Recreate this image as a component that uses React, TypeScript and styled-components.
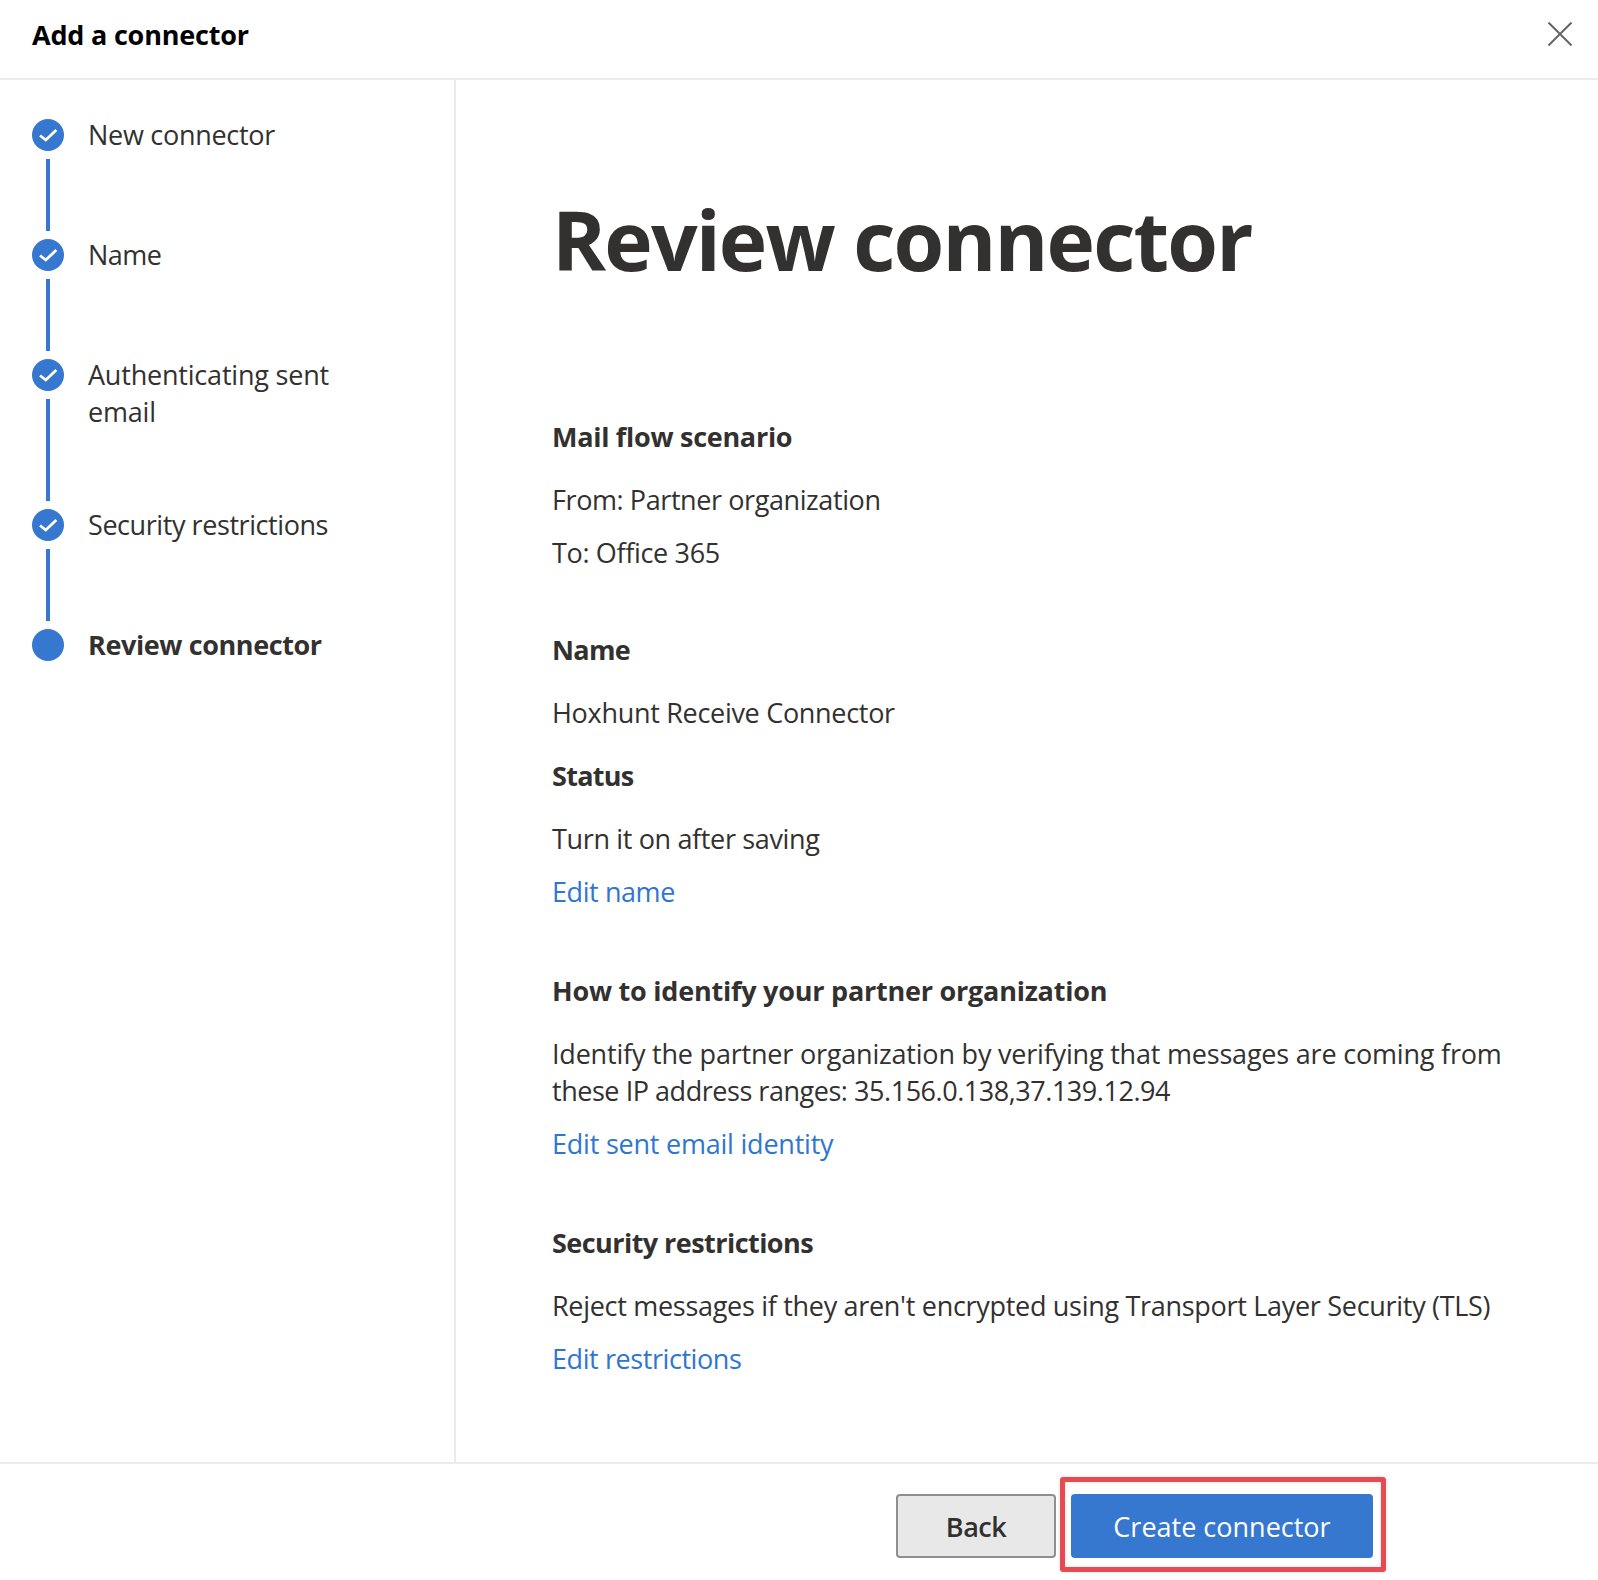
import React from "react";
import styled, { createGlobalStyle } from "styled-components";

const GlobalStyle = createGlobalStyle`
  html, body { margin: 0; padding: 0; background: #fff; }
  body { font-family: "Open Sans", "Noto Sans", "Liberation Sans", sans-serif; }
`;

const Panel = styled.div`
  width: 1598px;
  height: 1580px;
  display: flex;
  flex-direction: column;
  color: #323130;
  background: #fff;
  overflow: hidden;
`;

const Header = styled.header`
  height: 78px;
  flex: none;
  box-sizing: content-box;
  border-bottom: 2px solid #ebebeb;
  display: flex;
  align-items: center;
  justify-content: space-between;
  padding: 0 26px 0 32px;
`;

const HeaderTitle = styled.h1`
  margin: -10px 0 0;
  font-size: 27px;
  font-weight: 700;
  color: #000;
  letter-spacing: -0.2px;
`;

const CloseButton = styled.button`
  border: 0;
  background: none;
  padding: 0;
  width: 24px;
  height: 24px;
  display: block;
  color: #666;
  margin-top: -10px;
`;

const Body = styled.div`
  flex: 1;
  min-height: 0;
  display: flex;
`;

const Sidebar = styled.nav`
  width: 454px;
  flex: none;
  box-sizing: content-box;
  border-right: 2px solid #ebebeb;
  padding-top: 39px;
`;

const Step = styled.div<{ $height: number }>`
  display: grid;
  grid-template-columns: 32px 1fr;
  column-gap: 24px;
  height: ${(p) => p.$height}px;
  padding-left: 32px;
`;

const StepMarker = styled.div`
  display: flex;
  flex-direction: column;
  align-items: center;
`;

const StepCircle = styled.div`
  width: 32px;
  height: 32px;
  flex: none;
  border-radius: 50%;
  background: #3677d0;
`;

const StepLine = styled.div`
  flex: 1;
  width: 4px;
  background: #3677d0;
  margin: 8px 0;
`;

const StepLabel = styled.div<{ $current?: boolean; $ls?: number }>`
  font-size: 27px;
  line-height: 37px;
  margin-top: -3px;
  width: 260px;
  letter-spacing: ${(p) => p.$ls ?? -0.28}px;
  font-weight: ${(p) => (p.$current ? 700 : 400)};
`;

const Content = styled.main`
  flex: 1;
  min-width: 0;
  padding: 0 0 0 96px;
`;

const Title = styled.h2`
  margin: 109px 0 0;
  font-size: 82px;
  line-height: 100px;
  font-weight: 700;
  letter-spacing: -1.85px;
`;

const Section = styled.section<{ $top: number }>`
  margin-top: ${(p) => p.$top}px;
  width: 960px;
`;

const Heading = styled.h3<{ $ls?: number }>`
  margin: 0;
  font-size: 27px;
  line-height: 37px;
  font-weight: 700;
  letter-spacing: ${(p) => p.$ls ?? -0.4}px;
`;

const Text = styled.p<{ $top: number; $ls?: number }>`
  margin: ${(p) => p.$top}px 0 0;
  font-size: 27px;
  line-height: 37px;
  letter-spacing: ${(p) => p.$ls ?? -0.26}px;
`;

const TightRun = styled.span`
  letter-spacing: -0.46px;
`;

const EditLink = styled.a<{ $ls?: number }>`
  display: block;
  margin-top: 16px;
  font-size: 27px;
  line-height: 37px;
  letter-spacing: ${(p) => p.$ls ?? -0.3}px;
  color: #2f76d2;
  text-decoration: none;
`;

const Footer = styled.footer`
  flex: none;
  height: 118px;
  border-top: 2px solid #ebebeb;
  display: flex;
  align-items: flex-start;
  padding: 30px 0 0 896px;
  gap: 15px;
  box-sizing: border-box;
`;

const BackButton = styled.button`
  width: 160px;
  height: 64px;
  box-sizing: border-box;
  border: 2px solid #8f8f8f;
  border-radius: 4px;
  background: #e8e8e8;
  color: #323130;
  font: 600 27px "Open Sans", sans-serif;
  letter-spacing: -0.5px;
`;

const Highlight = styled.div`
  position: relative;
`;

const PrimaryButton = styled.button`
  width: 302px;
  height: 64px;
  border: 0;
  border-radius: 4px;
  background: #3677d0;
  color: #fff;
  font: 400 27px "Open Sans", sans-serif;
  letter-spacing: 0;
  display: block;
`;

const RedOutline = styled.div`
  position: absolute;
  left: -11px;
  right: -13px;
  top: -17px;
  bottom: -14px;
  border: 5px solid #e84a52;
  border-radius: 3px;
  box-shadow: 0 0 4px rgba(0, 0, 0, 0.12), inset 0 0 4px rgba(0, 0, 0, 0.12);
  pointer-events: none;
`;

const Check = () => (
  <svg width="32" height="32" viewBox="0 0 32 32" fill="none" style={{ display: "block" }}>
    <path d="M8 16.5 L13.8 21 L24.3 11" stroke="#fff" strokeWidth="2.8" />
  </svg>
);

const steps = [
  { label: "New connector", height: 120 },
  { label: "Name", height: 120, ls: -0.5 },
  { label: "Authenticating sent email", height: 150, ls: -0.2 },
  { label: "Security restrictions", height: 120, ls: -0.43 },
];

export default function App() {
  return (
    <>
      <GlobalStyle />
      <Panel>
        <Header>
          <HeaderTitle>Add a connector</HeaderTitle>
          <CloseButton aria-label="Close">
            <svg width="24" height="24" viewBox="0 0 24 24" fill="none">
              <path d="M0.5 0.5 L23.5 23.5 M23.5 0.5 L0.5 23.5" stroke="currentColor" strokeWidth="2" />
            </svg>
          </CloseButton>
        </Header>
        <Body>
          <Sidebar>
            {steps.map((s) => (
              <Step key={s.label} $height={s.height}>
                <StepMarker>
                  <StepCircle>
                    <Check />
                  </StepCircle>
                  <StepLine />
                </StepMarker>
                <StepLabel $ls={s.ls}>{s.label}</StepLabel>
              </Step>
            ))}
            <Step $height={40}>
              <StepMarker>
                <StepCircle />
              </StepMarker>
              <StepLabel $current $ls={-0.4}>Review connector</StepLabel>
            </Step>
          </Sidebar>
          <Content>
            <Title>Review connector</Title>
            <Section $top={129}>
              <Heading $ls={-0.28}>Mail flow scenario</Heading>
              <Text $top={26} $ls={-0.41}>From: Partner organization</Text>
              <Text $top={16} $ls={-0.34}>To: Office 365</Text>
            </Section>
            <Section $top={60}>
              <Heading $ls={-0.65}>Name</Heading>
              <Text $top={26} $ls={-0.3}>Hoxhunt Receive Connector</Text>
            </Section>
            <Section $top={26}>
              <Heading $ls={-0.7}>Status</Heading>
              <Text $top={26} $ls={-0.35}>Turn it on after saving</Text>
              <EditLink $ls={-0.42}>Edit name</EditLink>
            </Section>
            <Section $top={62}>
              <Heading $ls={-0.23}>How to identify your partner organization</Heading>
              <Text $top={26} $ls={-0.2}>
                Identify the partner organization by verifying that messages are coming from <TightRun>these IP address ranges: 35.156.0.138,37.139.12.94</TightRun>
              </Text>
              <EditLink $ls={-0.22}>Edit sent email identity</EditLink>
            </Section>
            <Section $top={62}>
              <Heading $ls={-0.55}>Security restrictions</Heading>
              <Text $top={26} $ls={-0.3}>Reject messages if they aren't encrypted using Transport Layer Security (TLS)</Text>
              <EditLink $ls={-0.42}>Edit restrictions</EditLink>
            </Section>
          </Content>
        </Body>
        <Footer>
          <BackButton>Back</BackButton>
          <Highlight>
            <PrimaryButton>Create connector</PrimaryButton>
            <RedOutline />
          </Highlight>
        </Footer>
      </Panel>
    </>
  );
}
